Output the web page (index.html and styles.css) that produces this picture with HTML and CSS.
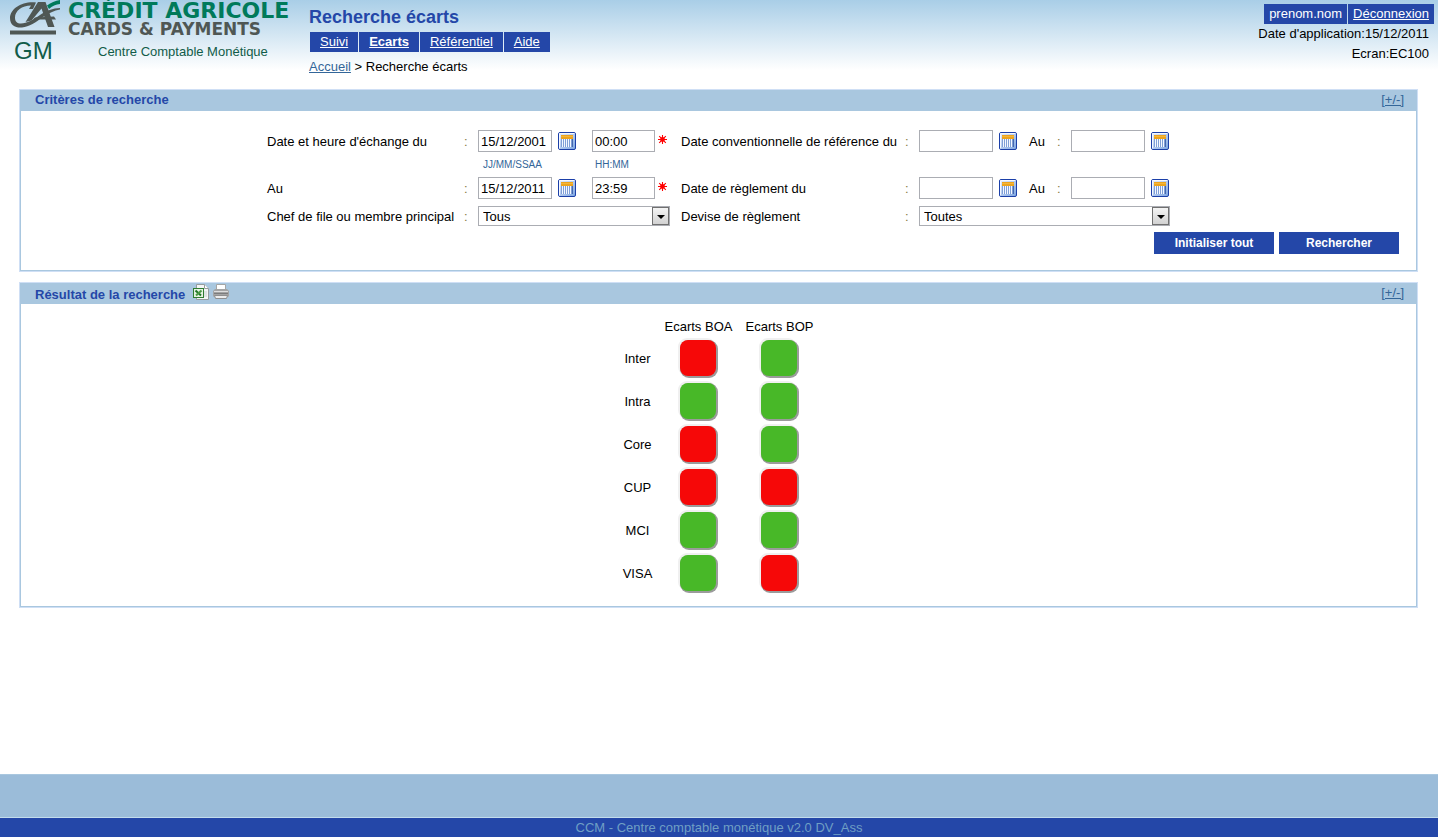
FILE: index.html
```html
<!DOCTYPE html>
<html lang="fr">
<head>
<meta charset="utf-8">
<meta name="viewport" content="width=device-width, initial-scale=1">
<title>Recherche écarts</title>
<link rel="stylesheet" href="styles.css">
</head>
<body>
<svg class="defs" width="0" height="0" aria-hidden="true">
  <defs>
    <linearGradient id="cal-fill" x1="0" y1="0" x2="1" y2="1">
      <stop offset="0" stop-color="#e8f0ff"/>
      <stop offset="1" stop-color="#7ba4e0"/>
    </linearGradient>
    <symbol id="calendar" viewBox="0 0 18 18">
      <rect x="0.5" y="0.5" width="17" height="17" rx="1.5" fill="url(#cal-fill)" stroke="#1b3fa8"/>
      <path d="M1.5 16.5V1.5H16.5" fill="none" stroke="#f4f8ff"/>
      <rect x="3" y="6" width="12" height="9" fill="#7f9fd6"/>
      <rect x="3" y="3" width="12" height="4" fill="#eda41c"/>
      <path d="M3 4.5H15" stroke="#f3b53c"/>
      <path d="M4.500 7V15M6.500 7V15M8.500 7V15M10.500 7V15M12.500 7V15" stroke="#f4f8ff"/>
      <path d="M14.500 7V15" stroke="#4668ad"/>
    </symbol>
    <symbol id="required" viewBox="0 0 9 9">
      <path d="M4.5 0V9M0 4.5H9M1.2 1.2L7.8 7.8M7.8 1.2L1.2 7.8" stroke="#f00" stroke-width="1.1"/>
      <circle cx="4.5" cy="4.5" r="2.4" fill="#f00"/>
    </symbol>
  </defs>
</svg>

<header class="header">
  <div class="brand">
    <div class="brand-top">
      <svg class="logo" viewBox="0 0 50 35" aria-hidden="true">
        <path d="M26 2.500C12 1 0 9 0 18C0 25 5 28 12 27.500C19 27 26 22 33 17C39 13 44 10.500 50 9.500V8C43 8 36 11 30 15C23 19.500 17 23.500 11 23.500C7 23.500 5 21.500 5 17.500C5 11 12 5.500 21 5.500L19 9H23Z" fill="#4f5754"/>
        <path d="M28 2H35.500L44.500 27H38L31.500 8.500L21.500 20.500L15.500 22Z" fill="#4f5754"/>
        <path d="M25 17.500L44 16.500L46 19.500H23Z" fill="#4f5754"/>
        <path d="M0 30.500H46V34.500H0Z" fill="#4f5754"/>
        <path d="M37 5.500C41 2.500 45 1 50 0V4C46 4.500 42 6 39 9Z" fill="#007a5a"/>
      </svg>
      <div class="brand-name">
        <span class="brand-main">CRÉDIT AGRICOLE</span>
        <span class="brand-sub">CARDS &amp; PAYMENTS</span>
      </div>
    </div>
    <div class="brand-bottom">
      <span class="gm">GM</span>
      <span class="centre">Centre Comptable Monétique</span>
    </div>
  </div>
  <div class="heading">
    <h1 class="title">Recherche écarts</h1>
    <nav class="menu">
      <a href="#suivi">Suivi</a>
      <a class="current" href="#ecarts">Ecarts</a>
      <a href="#referentiel">Référentiel</a>
      <a href="#aide">Aide</a>
    </nav>
    <div class="crumbs"><a href="#accueil">Accueil</a> &gt; Recherche écarts</div>
  </div>
  <div class="session">
    <div class="user"><span>prenom.nom</span><a href="#deconnexion">Déconnexion</a></div>
    <div class="info">Date d'application:15/12/2011</div>
    <div class="info">Ecran:EC100</div>
  </div>
</header>

<main class="main">
  <section class="panel">
    <div class="panel-head">
      <h2>Critères de recherche</h2>
      <a href="#criteres">[+/-]</a>
    </div>
    <form class="criteria">
      <div class="fields">
        <label for="d1">Date et heure d'échange du</label><span class="colon">:</span>
        <div class="controls">
          <input class="date" id="d1" type="text" value="15/12/2001">
          <button class="cal" type="button" aria-label="Calendrier"><svg><use href="#calendar"/></svg></button>
          <input class="time" type="text" value="00:00" aria-label="Heure de début">
          <svg class="req"><use href="#required"/></svg>
        </div>
        <label for="d2">Date conventionnelle de référence du</label><span class="colon">:</span>
        <div class="controls">
          <input class="date" id="d2" type="text">
          <button class="cal" type="button" aria-label="Calendrier"><svg><use href="#calendar"/></svg></button>
          <label class="to" for="d3">Au</label><span class="to-colon">:</span>
          <input class="date" id="d3" type="text">
          <button class="cal" type="button" aria-label="Calendrier"><svg><use href="#calendar"/></svg></button>
        </div>

        <div class="hints"><span>JJ/MM/SSAA</span><span>HH:MM</span></div>

        <label for="d4">Au</label><span class="colon">:</span>
        <div class="controls">
          <input class="date" id="d4" type="text" value="15/12/2011">
          <button class="cal" type="button" aria-label="Calendrier"><svg><use href="#calendar"/></svg></button>
          <input class="time" type="text" value="23:59" aria-label="Heure de fin">
          <svg class="req"><use href="#required"/></svg>
        </div>
        <label for="d5">Date de règlement du</label><span class="colon">:</span>
        <div class="controls">
          <input class="date" id="d5" type="text">
          <button class="cal" type="button" aria-label="Calendrier"><svg><use href="#calendar"/></svg></button>
          <label class="to" for="d6">Au</label><span class="to-colon">:</span>
          <input class="date" id="d6" type="text">
          <button class="cal" type="button" aria-label="Calendrier"><svg><use href="#calendar"/></svg></button>
        </div>

        <label class="last" for="chef">Chef de file ou membre principal</label><span class="colon last">:</span>
        <div class="select select-chef last">
          <select id="chef"><option>Tous</option></select>
          <span class="arrow"></span>
        </div>
        <label class="last" for="devise">Devise de règlement</label><span class="colon last">:</span>
        <div class="select select-devise last">
          <select id="devise"><option>Toutes</option></select>
          <span class="arrow"></span>
        </div>
      </div>
      <div class="actions">
        <button class="btn" type="button">Initialiser tout</button>
        <button class="btn" type="button">Rechercher</button>
      </div>
    </form>
  </section>

  <section class="panel">
    <div class="panel-head">
      <div class="with-tools">
        <h2 class="low">Résultat de la recherche</h2>
        <a href="#excel" aria-label="Exporter vers Excel"><svg width="16" height="16" viewBox="0 0 16 16">
          <path d="M3.500 0.500H11.500L15.500 4.500V15.500H3.500Z" fill="#f4f6f6" stroke="#969c9e"/>
          <path d="M11.500 0.500V4.500H15.500" fill="#fff" stroke="#969c9e"/>
          <path d="M11 8H14M11 10H14M11 12H14" stroke="#c9d0d0"/>
          <rect x="0.500" y="4.500" width="10" height="9" fill="#e6f3e2" stroke="#2f7d32"/>
          <path d="M2.500 6.500L8 11.500" stroke="#1f7426" stroke-width="2"/>
          <path d="M8.500 6.500L3 11.500" stroke="#4b9a45" stroke-width="2"/>
        </svg></a>
        <a href="#imprimer" aria-label="Imprimer"><svg width="16" height="16" viewBox="0 0 16 16">
          <path d="M3.500 7V0.500H12.500V7Z" fill="#fff" stroke="#a5a5a5"/>
          <path d="M2 5H14L16 7V12L15 13H1L0 12V7Z" fill="#a4a4a4"/>
          <path d="M1 7.500H15" stroke="#dedede"/>
          <path d="M1 9.500H15" stroke="#7c7c7c"/>
          <path d="M1.500 11.500H14.500L13.500 14.500H2.500Z" fill="#ececec" stroke="#8f8f8f"/>
        </svg></a>
      </div>
      <a href="#resultat">[+/-]</a>
    </div>
    <div class="results">
      <table class="grid">
        <thead><tr><th class="name"></th><th>Ecarts BOA</th><th>Ecarts BOP</th></tr></thead>
        <tbody>
          <tr><th>Inter</th><td><i class="light red"></i></td><td><i class="light green"></i></td></tr>
          <tr><th>Intra</th><td><i class="light green"></i></td><td><i class="light green"></i></td></tr>
          <tr><th>Core</th><td><i class="light red"></i></td><td><i class="light green"></i></td></tr>
          <tr><th>CUP</th><td><i class="light red"></i></td><td><i class="light red"></i></td></tr>
          <tr><th>MCI</th><td><i class="light green"></i></td><td><i class="light green"></i></td></tr>
          <tr><th>VISA</th><td><i class="light green"></i></td><td><i class="light red"></i></td></tr>
        </tbody>
      </table>
    </div>
  </section>
</main>

<footer class="footer">
  <div class="footer-band"></div>
  <div class="footer-text">CCM - Centre comptable monétique v2.0 DV_Ass</div>
</footer>
</body>
</html>
```
FILE: styles.css
```css
* { box-sizing: border-box; }

body {
  margin: 0;
  min-height: 100vh;
  display: flex;
  flex-direction: column;
  background: #fff linear-gradient(#a9cee7, #fff) no-repeat 0 0 / 100% 70px;
  color: #000;
  font: 13px/16px "Liberation Sans", Arial, sans-serif;
}

a { color: #336699; }
.defs { position: absolute; }

/* Header */
.header {
  display: flex;
  align-items: flex-start;
  min-height: 90px;
}
.brand { width: 309px; flex: none; color: #115c49; }
.brand-top { display: flex; gap: 8px; padding-left: 10px; height: 38px; }
.logo { width: 50px; height: 35px; flex: none; }
.brand-name {
  display: flex;
  flex-direction: column;
  font-family: "DejaVu Sans", Verdana, sans-serif;
  font-weight: bold;
  white-space: nowrap;
}
.brand-main { color: #007a5a; font-size: 22px; line-height: 21px; }
.brand-sub { color: #4f5754; font-size: 17px; line-height: 17px; }
.brand-bottom { display: flex; align-items: center; padding-left: 14px; }
.gm { width: 84px; font-size: 24px; line-height: 26px; }
.centre { padding-top: 2px; }

.heading { flex: 1; }
.title { margin: 7px 0 5px; color: #2447a8; font-size: 18px; line-height: 20px; }
.menu { display: flex; gap: 1px; padding-left: 1px; }
.menu a {
  padding: 2px 10px;
  background: #2447a8;
  color: #fff;
}
.menu .current { font-weight: bold; }
.crumbs { margin-top: 7px; }

.session {
  display: flex;
  flex-direction: column;
  align-items: flex-end;
  padding: 4px 4px 0 0;
}
.user { display: flex; gap: 1px; }
.user > * { padding: 2px 5px; background: #2447a8; color: #fff; }
.info { padding: 2px 5px; }

/* Panels */
.main {
  flex: 1;
  display: flex;
  flex-direction: column;
  gap: 12px;
  padding: 0 21px 0 20px;
}
.panel {
  border: 1px solid #a9c7df;
  box-shadow: 0 0 0 1px #cfdff5;
}
.panel-head {
  display: flex;
  justify-content: space-between;
  height: 20px;
  padding: 0 12px 0 14px;
  background: #a9c7df;
  line-height: 18px;
}
.panel-head h2 { margin: 0; color: #2447a8; font-size: 13px; line-height: 18px; }
.panel-head h2.low { margin-right: 4px; line-height: 22px; }
.with-tools { display: flex; gap: 4px; line-height: 16px; }
.with-tools svg { display: block; }

/* Search criteria */
.criteria { padding: 19px 17px 16px; }
.fields {
  display: grid;
  grid-template-columns: 197px 14px 203px 224px 14px 251px;
  align-items: center;
  justify-content: center;
}
.fields label, .colon, .to-colon { padding-top: 2px; }
.colon, .to-colon { color: #8a7a42; }
.controls { display: flex; align-items: center; }
.controls input {
  height: 22px;
  padding: 1px 2px;
  border: 1px solid #abadb3;
  background: #fff;
  color: #000;
  font: inherit;
}
.date { width: 74px; }
.time { width: 63px; }
.cal {
  margin: 0 6px;
  padding: 0;
  border: 0;
  background: none;
  height: 18px;
}
.cal svg { display: block; width: 18px; height: 18px; }
.controls .time { margin-left: 10px; }
.req { width: 9px; height: 9px; margin-left: 3px; margin-bottom: 4px; }
.to { width: 28px; margin-left: 6px; }
.to-colon { width: 14px; }
.controls .cal:last-child { margin-right: 0; }
.hints {
  grid-column: 3 / -1;
  display: flex;
  padding: 6px 0 5px 5px;
  color: #336699;
  font-size: 10px;
  line-height: 14px;
}
.hints span:first-child { width: 112px; }
.last { margin-top: 7px; }

.select { position: relative; }
.select-chef { width: 192px; }
.select-devise { width: 251px; }
.select select {
  appearance: none;
  display: block;
  width: 100%;
  height: 20px;
  padding: 2px 20px 0 4px;
  border: 1px solid #abadb3;
  border-radius: 0;
  background: #fff;
  color: #000;
  font: inherit;
}
.arrow {
  position: absolute;
  top: 1px;
  right: 1px;
  width: 17px;
  height: 18px;
  border: 1px solid #707070;
  background: linear-gradient(#f4f4f4, #d2d2d2);
  pointer-events: none;
}
.arrow::after {
  content: "";
  position: absolute;
  left: 4px;
  top: 7px;
  border: 4px solid transparent;
  border-top-color: #000;
  border-bottom: 0;
}

.actions { display: flex; justify-content: flex-end; gap: 5px; margin-top: 6px; }
.btn {
  width: 120px;
  height: 22px;
  padding: 0;
  border: 0;
  background: #2447a8;
  color: #fff;
  font: bold 12px/22px "Liberation Sans", Arial, sans-serif;
}

/* Results */
.results { padding: 12px 0 11px; }
.grid { margin: 0 auto; border-collapse: collapse; }
.grid th { padding: 0; font-weight: normal; text-align: center; }
.grid td { padding: 0 1px 2px 0; }
.grid thead th { width: 81px; height: 21px; }
.grid thead .name { width: 41px; }
.grid tbody tr { height: 43px; }
.light {
  display: block;
  width: 36px;
  height: 36px;
  margin: 0 auto;
  border-radius: 8px;
  box-shadow: 1px 1px 0 1px #9b9b9b, -1px -1px 0 1px #f0f0f0;
}
.red { background: #f60808; }
.green { background: #48b828; }

/* Footer */
.footer-band {
  height: 44px;
  border-top: 1px solid #a9c7df;
  border-bottom: 1px solid #c3dcec;
  background: #9bbcd9;
}
.footer-text {
  background: #2447a8;
  color: #6f9fc4;
  line-height: 19px;
  text-align: center;
}
```
